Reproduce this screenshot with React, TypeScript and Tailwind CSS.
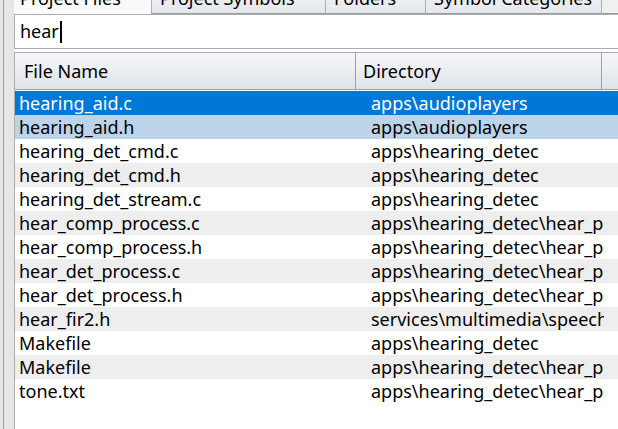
const rows: { name: string; dir: string }[] = [
  { name: 'hearing_aid.c', dir: 'apps\\audioplayers' },
  { name: 'hearing_aid.h', dir: 'apps\\audioplayers' },
  { name: 'hearing_det_cmd.c', dir: 'apps\\hearing_detec' },
  { name: 'hearing_det_cmd.h', dir: 'apps\\hearing_detec' },
  { name: 'hearing_det_stream.c', dir: 'apps\\hearing_detec' },
  { name: 'hear_comp_process.c', dir: 'apps\\hearing_detec\\hear_process' },
  { name: 'hear_comp_process.h', dir: 'apps\\hearing_detec\\hear_process' },
  { name: 'hear_det_process.c', dir: 'apps\\hearing_detec\\hear_process' },
  { name: 'hear_det_process.h', dir: 'apps\\hearing_detec\\hear_process' },
  { name: 'hear_fir2.h', dir: 'services\\multimedia\\speech' },
  { name: 'Makefile', dir: 'apps\\hearing_detec' },
  { name: 'Makefile', dir: 'apps\\hearing_detec\\hear_process' },
  { name: 'tone.txt', dir: 'apps\\hearing_detec\\hear_process' },
]

const tabs = ['Project Files', 'Project Symbols', 'Folders', 'Symbol Categories']
const tabWidths = ['w-[138px]', 'w-[174px]', 'w-[100px]', 'w-[176px]']

function rowClass(i: number) {
  if (i === 0) return 'bg-[#0078d7] text-white'
  if (i === 1) return 'bg-[#bcd3e9] text-black'
  return i % 2 === 1 ? 'bg-[#eeeeee] text-black' : 'bg-white text-black'
}

export default function App() {
  return (
    <div
      className="flex h-[429px] w-[618px] overflow-hidden bg-white"
      style={{ fontFamily: '"Noto Sans", "Open Sans", sans-serif' }}
    >
      <div className="flex w-[14px] shrink-0 bg-[#e6e6e6]">
        <div className="ml-[3px] w-px bg-[#a0a0a0]" />
      </div>
      <div className="flex min-w-0 flex-1 flex-col">
        {/* tab strip, scrolled mostly out of view */}
        <div className="-mt-[14px] flex h-[28px] shrink-0">
          {tabs.map((t, i) => (
            <div
              key={t}
              className={`${tabWidths[i]} shrink-0 overflow-hidden border-r border-[#b0b0b0] text-[18px] leading-[24px] whitespace-nowrap ${i === 0 ? 'bg-[#fafafa] pl-[6px]' : 'border-b border-b-[#9a9a9a] bg-gradient-to-b from-[#f3f3f3] to-[#e4e8ee] pl-[8px]'}`}
            >
              {t}
            </div>
          ))}
          <div className="flex-1 border-b border-[#9a9a9a] bg-[#f0f0f0]" />
        </div>
        <div className="flex h-[35px] shrink-0 items-center border border-r-0 border-[#adadad] bg-white pl-[5px] text-[18px]">
          <span>hear</span>
          <span className="ml-px inline-block h-[22px] w-[2px] bg-black" />
        </div>
        <div className="mt-[3px] flex min-h-0 flex-1 flex-col border-l border-t border-[#adadad]">
          <div className="flex h-[37px] shrink-0 border-b border-[#a0a0a0] bg-gradient-to-b from-[#f5f7fa] to-[#dfe4ea] text-[18px]">
            <div className="flex w-[341px] shrink-0 items-center border-r border-[#a0a0a0] pl-[9px]">File Name</div>
            <div className="flex w-[246px] shrink-0 items-center border-r border-[#a0a0a0] pl-[7px]">Directory</div>
            <div className="flex-1" />
          </div>
          <div className="flex flex-col pt-px">
            {rows.map((r, i) => (
              <div key={i} className={`flex h-[24px] items-center text-[18px] whitespace-nowrap ${rowClass(i)}`}>
                <div className="w-[356px] shrink-0 overflow-hidden pl-[4px]">{r.name}</div>
                <div className="w-[233px] shrink-0 overflow-hidden">{r.dir}</div>
                <div className="flex-1" />
              </div>
            ))}
          </div>
        </div>
      </div>
    </div>
  )
}
